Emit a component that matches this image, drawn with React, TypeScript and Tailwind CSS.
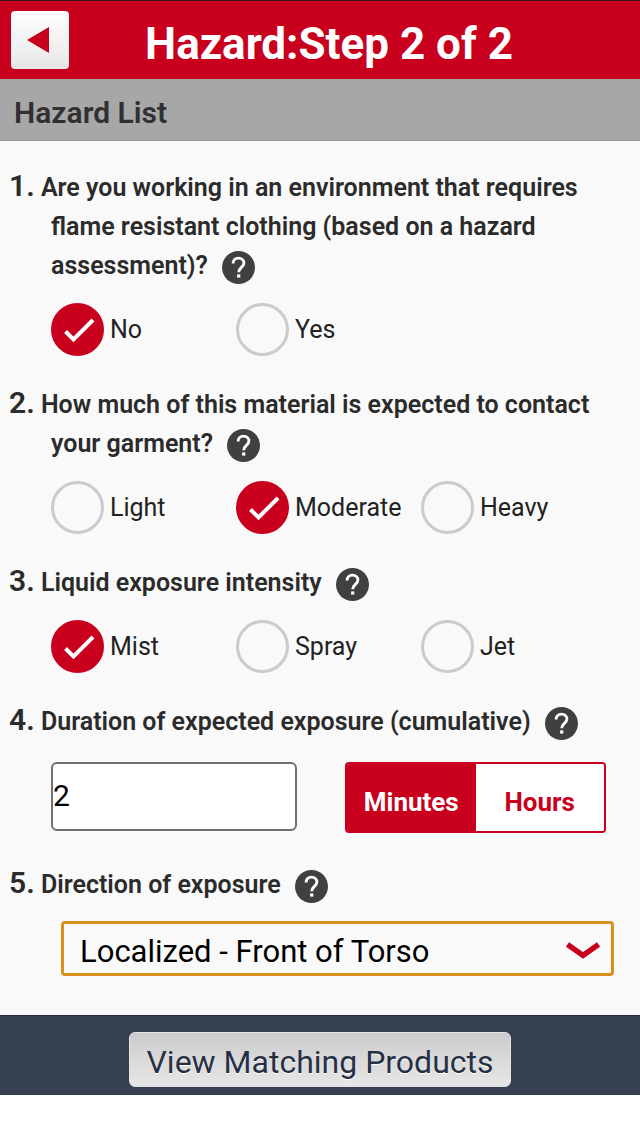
import React, { useState } from "react";

type QuestionProps = {
  id: string;
  number: number;
  text: string;
};

type OptionsProps = {
  name: string;
  options: string[];
  initial: string;
};

const HelpButton = () => {
  return (
    <button
      type="button"
      aria-label="Help"
      className="ml-3.5 inline-flex h-[33px] w-[33px] items-center justify-center rounded-full bg-[#404040] indent-0 align-middle"
    >
      <svg className="h-[33px] w-[33px]" viewBox="0 0 33 33" fill="none">
        <path
          d="M11.1 12.6c0-3.5 2.3-5.5 5.4-5.5s5.4 2 5.4 4.9c0 4.3-5.2 4.5-5.2 9.2"
          stroke="white"
          strokeWidth="2.8"
        />
        <rect x="15.1" y="23.4" width="3.2" height="3.2" fill="white" />
      </svg>
    </button>
  );
};

const Question = ({ id, number, text }: QuestionProps) => {
  return (
    <h2 className="-indent-[42px] text-[25px] font-semibold leading-[39px] text-[#2b2b2b]">
      <span className="text-[30px] leading-none">{number}.</span>{" "}
      <span id={id}>{text}</span>
      <HelpButton />
    </h2>
  );
};

const Options = ({ name, options, initial }: OptionsProps) => {
  return (
    <div
      role="radiogroup"
      aria-labelledby={name}
      className="mt-[18px] grid grid-cols-3"
    >
      {options.map((option) => (
        <label
          key={option}
          className="flex cursor-pointer items-center gap-1.5 text-[25px] leading-8 text-[#222222]"
        >
          <span className="grid shrink-0">
            <input
              type="radio"
              name={name}
              defaultChecked={option === initial}
              className="peer col-start-1 row-start-1 h-[53px] w-[53px] appearance-none rounded-full border-[3px] border-[#cbcbcf] checked:border-[#c8001e] checked:bg-[#c8001e]"
            />
            <svg
              className="pointer-events-none col-start-1 row-start-1 hidden h-[53px] w-[53px] peer-checked:block"
              viewBox="0 0 53 53"
              fill="none"
            >
              <path
                d="M14.5 28.5l8 8 19.5-19.5"
                stroke="white"
                strokeWidth="4"
              />
            </svg>
          </span>
          {option}
        </label>
      ))}
    </div>
  );
};

const App = () => {
  const [unit, setUnit] = useState("Minutes");

  return (
    <div className="font-[Roboto,sans-serif]">
      <header className="flex h-[79px] items-center border-t border-[#3a1218] bg-[#c8001e] px-[11px]">
        <button
          type="button"
          aria-label="Back"
          className="flex h-[58px] w-[58px] shrink-0 items-center justify-center rounded bg-linear-to-b from-white to-[#e6e6e6] pr-1"
        >
          <svg className="h-[26px] w-[22px]" viewBox="0 0 22 26">
            <path d="M0 13L22 0v26z" fill="#c8001e" />
          </svg>
        </button>
        <h1 className="flex-1 pr-10 pt-2 text-center text-[44px] font-bold leading-[52px] text-white">
          Hazard:Step 2 of 2
        </h1>
      </header>
      <div className="flex h-[62px] items-center border-b border-[#999999] bg-[#a7a7a7] px-3.5 pt-1.5 text-[30px] font-semibold text-[#303030]">
        Hazard List
      </div>

      <main className="bg-[#f9f9f9] pb-[39px] pl-[51px] pr-[34px] pt-[27px]">
        <section>
          <Question
            id="flame"
            number={1}
            text="Are you working in an environment that requires flame resistant clothing (based on a hazard assessment)?"
          />
          <Options name="flame" options={["No", "Yes"]} initial="No" />
        </section>
        <section className="mt-[29px]">
          <Question
            id="contact"
            number={2}
            text="How much of this material is expected to contact your garment?"
          />
          <Options
            name="contact"
            options={["Light", "Moderate", "Heavy"]}
            initial="Moderate"
          />
        </section>
        <section className="mt-[29px]">
          <Question id="intensity" number={3} text="Liquid exposure intensity" />
          <Options
            name="intensity"
            options={["Mist", "Spray", "Jet"]}
            initial="Mist"
          />
        </section>
        <section className="mt-[29px]">
          <Question
            id="duration"
            number={4}
            text="Duration of expected exposure (cumulative)"
          />
          <div className="mt-[21px] flex gap-12">
            <input
              type="text"
              inputMode="numeric"
              aria-labelledby="duration"
              defaultValue="2"
              className="h-[69px] w-[246px] rounded-md border-2 border-[#6f6f6f] bg-white pb-0.5 text-[30px] text-black"
            />
            <div className="flex h-[71px] flex-1 overflow-hidden rounded border-2 border-[#c8001e]">
              {["Minutes", "Hours"].map((item) => (
                <button
                  key={item}
                  type="button"
                  aria-pressed={unit === item}
                  onClick={() => setUnit(item)}
                  className={`flex-1 pt-2.5 text-[26px] font-bold ${
                    unit === item
                      ? "bg-[#c8001e] text-white"
                      : "bg-white text-[#c8001e]"
                  }`}
                >
                  {item}
                </button>
              ))}
            </div>
          </div>
        </section>
        <section className="mt-8">
          <Question id="direction" number={5} text="Direction of exposure" />
          <div className="-mr-2 ml-2.5 mt-[17px] grid items-center">
            <select
              aria-labelledby="direction"
              className="col-start-1 row-start-1 h-[55px] appearance-none rounded border-[3px] border-[#d9901a] bg-[#f9f9f9] px-4 pt-1.5 text-[31px] leading-10 text-black"
            >
              <option>Localized - Front of Torso</option>
              <option>Localized - Back of Torso</option>
              <option>Full Body</option>
            </select>
            <svg
              className="pointer-events-none col-start-1 row-start-1 mr-3.5 mt-1 h-5 w-[34px] justify-self-end"
              viewBox="0 0 34 20"
              fill="none"
            >
              <path d="M1.5 3.5L17 14.5L32.5 3.5" stroke="#c8001e" strokeWidth="5.5" />
            </svg>
          </div>
        </section>
      </main>

      <footer className="flex h-20 justify-center border-t border-[#20293a] bg-[#374051] pt-4">
        <button
          type="button"
          className="h-[55px] rounded-md border border-[#e2e2e2] bg-linear-to-b from-[#cccccc] to-[#e6e6e6] px-4 pt-1 text-[32px] leading-10 text-[#253044] [text-shadow:0_1px_1px_#ffffff]"
        >
          View Matching Products
        </button>
      </footer>
    </div>
  );
};

export default App;
